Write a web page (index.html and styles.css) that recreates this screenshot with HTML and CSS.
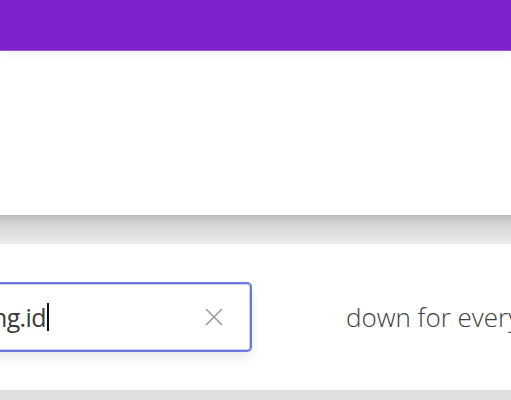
FILE: index.html
```html
<!DOCTYPE html>
<html>
<head>
<meta charset="utf-8">
<link rel="stylesheet" href="styles.css">
</head>
<body>
<header class="topbar"></header>
<section class="hero"></section>
<div class="divider"></div>
<section class="search">
  <div class="search-row">
    <div class="field">
      <span class="value">isitdowncheckingng.id</span><span class="caret"></span>
      <svg class="clear" width="18" height="18" viewBox="0 0 18 18" aria-label="clear"><path d="M1.5 1.5 L16.5 16.5 M16.5 1.5 L1.5 16.5" stroke="#9c9ca6" stroke-width="1.7" fill="none" stroke-linecap="round"/></svg>
    </div>
    <p class="tagline">down for everyone or just me?</p>
  </div>
</section>
<footer class="bottom"></footer>
</body>
</html>
```
FILE: styles.css
```css
html, body {
  margin: 0;
  padding: 0;
  width: 511px;
  height: 400px;
  overflow: hidden;
  background: #ffffff;
  font-family: "Open Sans", "Noto Sans", sans-serif;
}
.topbar {
  height: 50px;
  background: #7e22ce;
  border-bottom: 1px solid #9a5bc9;
  box-shadow: 0 3px 8px rgba(60, 40, 120, 0.07);
  position: relative;
  z-index: 1;
}
.hero {
  height: 164px;
  background: #ffffff;
}
.divider {
  height: 29px;
  background: linear-gradient(#bdbdbd, #d9d9d9 40%, #ebebeb);
}
.search {
  height: 146px;
  background: #ffffff;
  display: flex;
  flex-direction: column;
}
.search-row {
  margin-top: 38px;
  display: flex;
  align-items: center;
  gap: 94px;
  margin-left: -200px;
  white-space: nowrap;
}
.field {
  flex: none;
  box-sizing: border-box;
  width: 452px;
  height: 70px;
  border: 2px solid #6b78df;
  box-shadow: inset 0 0 0 1px #c9cdf4, 0 6px 12px rgba(0, 0, 0, 0.08);
  border-radius: 5px;
  background: #fff;
  display: flex;
  align-items: center;
  justify-content: flex-end;
  padding-right: 27px;
  overflow: hidden;
}
.value {
  font-size: 25px;
  color: #3a3a3a;
  letter-spacing: -0.6px;
}
.caret {
  flex: none;
  width: 2px;
  height: 28px;
  background: #111;
  margin-left: 1px;
  margin-right: 156px;
}
.clear {
  flex: none;
  display: block;
}
.tagline {
  margin: 0;
  font-size: 26px;
  font-weight: 300;
  color: #3e3e3e;
}
.bottom {
  height: 10px;
  background: #e0e0e0;
}
```
